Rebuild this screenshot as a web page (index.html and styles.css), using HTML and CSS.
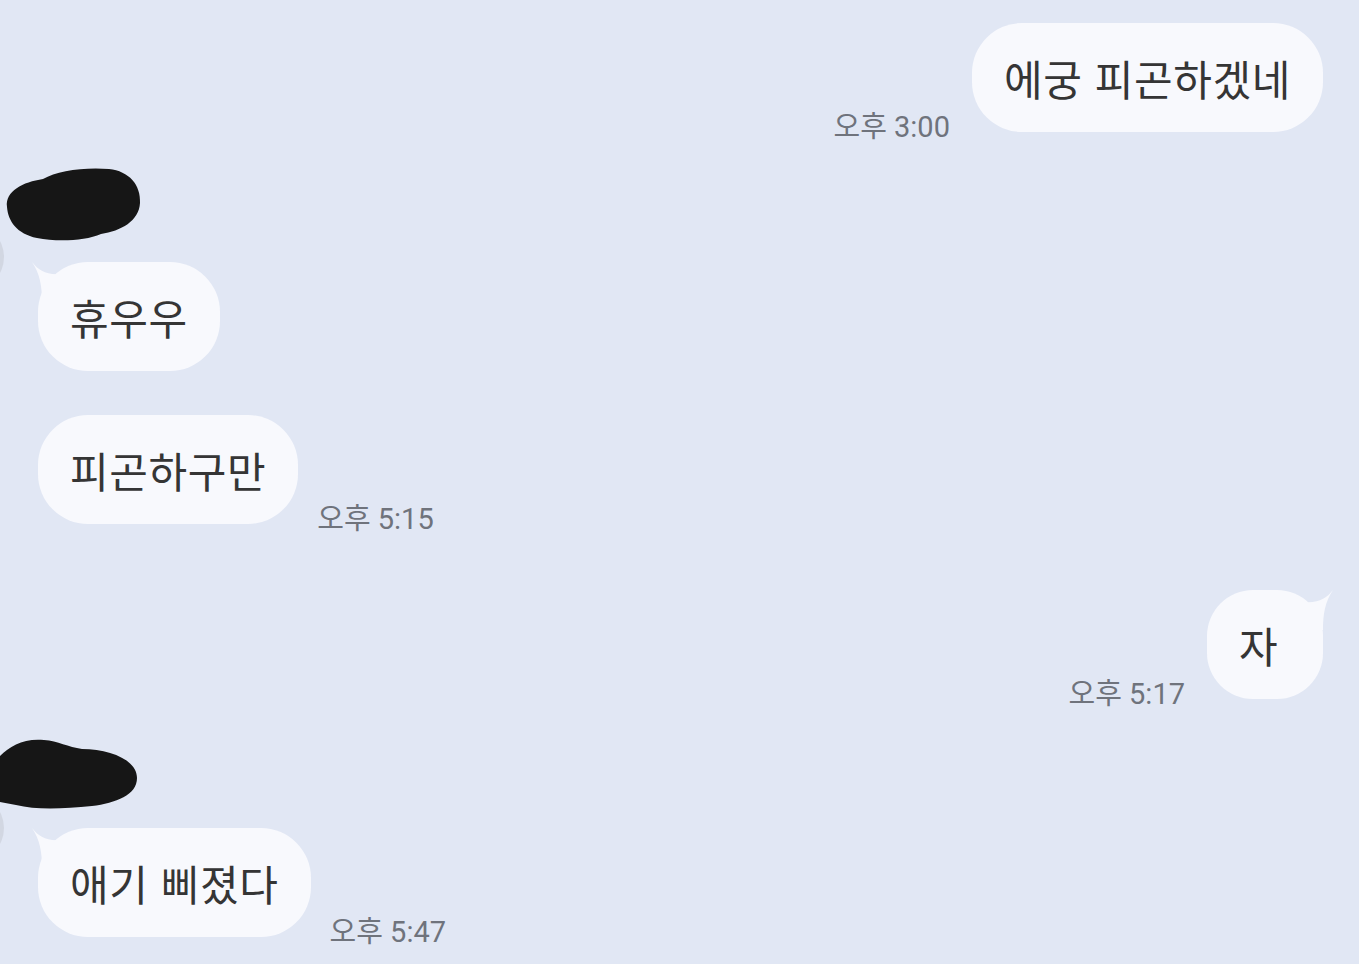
FILE: index.html
```html
<!DOCTYPE html>
<html lang="ko">
<head>
<meta charset="utf-8">
<title>채팅</title>
<link rel="stylesheet" href="styles.css">
</head>
<body>
<main class="chat">
  <div class="row row-me">
    <span class="time">오후 3:00</span>
    <div class="bubble">에궁 피곤하겠네</div>
  </div>

  <div class="sender sender-1">
    <span class="avatar-edge"></span>
    <svg class="redact" width="136" height="75" viewBox="0 0 136 75" aria-hidden="true">
      <path d="M2 40 C0 24 18 15 38 12 C52 4 78 0 104 2 C124 4 136 18 135 36 C134 54 116 64 96 67 C80 74 52 75 32 71 C12 67 3 54 2 40 Z" fill="#161616"/>
    </svg>
  </div>
  <div class="row row-you row-first">
    <div class="bubble">휴우우<svg class="tail tail-left" width="30" height="40" viewBox="0 0 30 40" aria-hidden="true"><path d="M0 0 C6 8 14 13 28 12 L28 40 L10 40 C10 24 8 12 0 0 Z"/></svg></div>
  </div>
  <div class="row row-you row-cont">
    <div class="bubble">피곤하구만</div>
    <span class="time">오후 5:15</span>
  </div>

  <div class="row row-me row-new">
    <span class="time">오후 5:17</span>
    <div class="bubble bubble-small">자<svg class="tail tail-right" width="30" height="40" viewBox="0 0 30 40" aria-hidden="true"><path d="M30 0 C24 8 16 13 2 12 L2 40 L20 40 C20 24 22 12 30 0 Z"/></svg></div>
  </div>

  <div class="sender sender-2">
    <span class="avatar-edge"></span>
    <svg class="redact" width="138" height="72" viewBox="0 0 138 72" aria-hidden="true">
      <path d="M0 18 C10 8 24 0 44 2 C58 3 68 9 82 11 C110 11 137 22 137 40 C137 57 116 65 92 68 C62 71 36 72 16 67 L0 64 Z" fill="#161616"/>
    </svg>
  </div>
  <div class="row row-you row-first">
    <div class="bubble">애기 삐졌다<svg class="tail tail-left" width="30" height="40" viewBox="0 0 30 40" aria-hidden="true"><path d="M0 0 C6 8 14 13 28 12 L28 40 L10 40 C10 24 8 12 0 0 Z"/></svg></div>
    <span class="time">오후 5:47</span>
  </div>
</main>
</body>
</html>
```

FILE: styles.css
```css
* { box-sizing: border-box; }

html, body {
  margin: 0;
  padding: 0;
  background: #e1e7f4;
  height: 100%;
  overflow: hidden;
}

.chat {
  display: flex;
  flex-direction: column;
  padding-top: 23px;
  font-family: "Noto Sans CJK KR", "Noto Sans", sans-serif;
}

.row {
  display: flex;
  align-items: flex-end;
}

.row-me {
  justify-content: flex-end;
  padding-right: 36px;
  gap: 22px;
}

.row-you {
  justify-content: flex-start;
  padding-left: 38px;
  gap: 19px;
}

.row-first { margin-top: 21px; }
.row-cont { margin-top: 44px; }
.row-new { margin-top: 66px; }

.bubble {
  position: relative;
  height: 109px;
  display: flex;
  align-items: center;
  padding: 0 32px 0 32px;
  background: #f8f9fd;
  border-radius: 50px;
  font-size: 42px;
  line-height: 1;
  letter-spacing: 0.6px;
  color: #353535;
  white-space: nowrap;
}

.bubble-small {
  min-width: 116px;
  border-radius: 46px;
}

.tail {
  position: absolute;
  top: 0;
  fill: #f8f9fd;
}

.tail-left { left: -6px; }
.tail-right { right: -10px; }

.time {
  font-family: Roboto, "Noto Sans CJK KR", sans-serif;
  font-size: 29px;
  line-height: 29px;
  color: #6f737c;
  white-space: nowrap;
  margin-bottom: -10px;
}

.sender {
  position: relative;
}

.sender-1 {
  margin-top: 35px;
  padding-left: 5px;
  height: 74px;
}

.sender-2 {
  margin-top: 39px;
  height: 71px;
}

.sender-2 + .row-first { margin-top: 19px; }

.redact { display: block; }

.avatar-edge {
  position: absolute;
  left: -64px;
  top: 56px;
  width: 68px;
  height: 68px;
  border-radius: 50%;
  background: #d2d7e2;
}
```
